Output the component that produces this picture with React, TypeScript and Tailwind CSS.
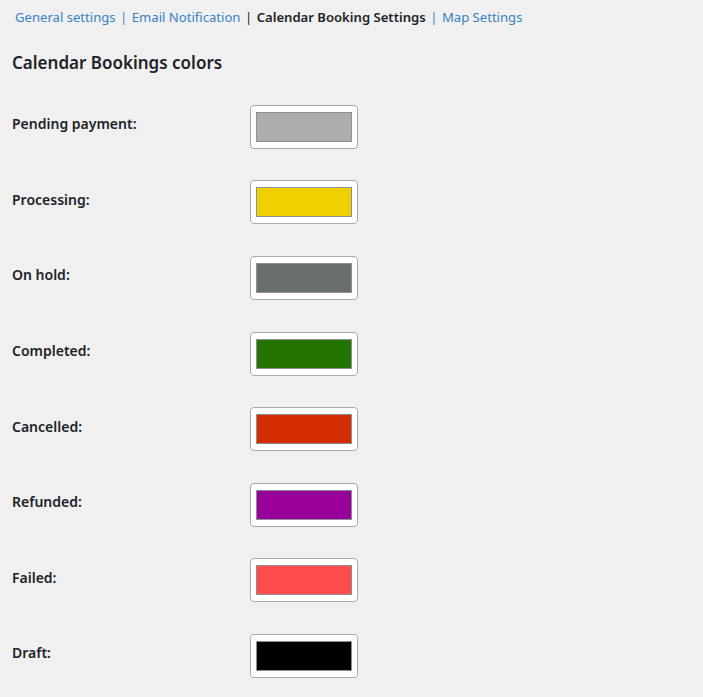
import React from 'react'

const statuses = [
  { label: 'Pending payment:', color: '#adadab' },
  { label: 'Processing:', color: '#f0d000' },
  { label: 'On hold:', color: '#6a6e6c' },
  { label: 'Completed:', color: '#247500' },
  { label: 'Cancelled:', color: '#d42d00' },
  { label: 'Refunded:', color: '#990099' },
  { label: 'Failed:', color: '#ff4d4d' },
  { label: 'Draft:', color: '#000000' },
]

const tabs = [
  { name: 'General settings', active: false },
  { name: 'Email Notification', active: false },
  { name: 'Calendar Booking Settings', active: true },
  { name: 'Map Settings', active: false },
]

export default function App() {
  return (
    <div
      className="min-h-screen bg-[#f0f0f1] text-[#1d2327] pl-3"
      style={{ fontFamily: '"Noto Sans", "Open Sans", sans-serif' }}
    >
      {/* tabs */}
      <nav className="flex items-center pt-[6px] pl-[3px] text-[13.1px] leading-[22px]">
        {tabs.map((tab, i) => (
          <React.Fragment key={tab.name}>
            {i > 0 && (
              <span className={tab.active ? 'px-[4.5px] text-[#1d2327]' : 'px-[4.5px] text-[#3582c4]'}>|</span>
            )}
            <a
              href="#"
              className={tab.active ? 'font-semibold text-[#1d2327]' : 'text-[#3582c4]'}
            >
              {tab.name}
            </a>
          </React.Fragment>
        ))}
      </nav>

      <h2 className="mt-[23px] text-[17px] leading-[24px] font-semibold">Calendar Bookings colors</h2>

      {/* color rows */}
      <div className="mt-[14px]">
        {statuses.map((s) => (
          <div key={s.label} className="flex items-center h-[75.6px]">
            <label className="w-[238px] text-[14px] font-semibold -mt-[6px]">{s.label}</label>
            <div className="w-[108px] h-[44px] bg-white border border-[#a7aaad] rounded-[4px] px-[5px] py-[6px]">
              <div className="w-full h-full border border-[#8c8f94]" style={{ backgroundColor: s.color }} />
            </div>
          </div>
        ))}
      </div>
    </div>
  )
}
